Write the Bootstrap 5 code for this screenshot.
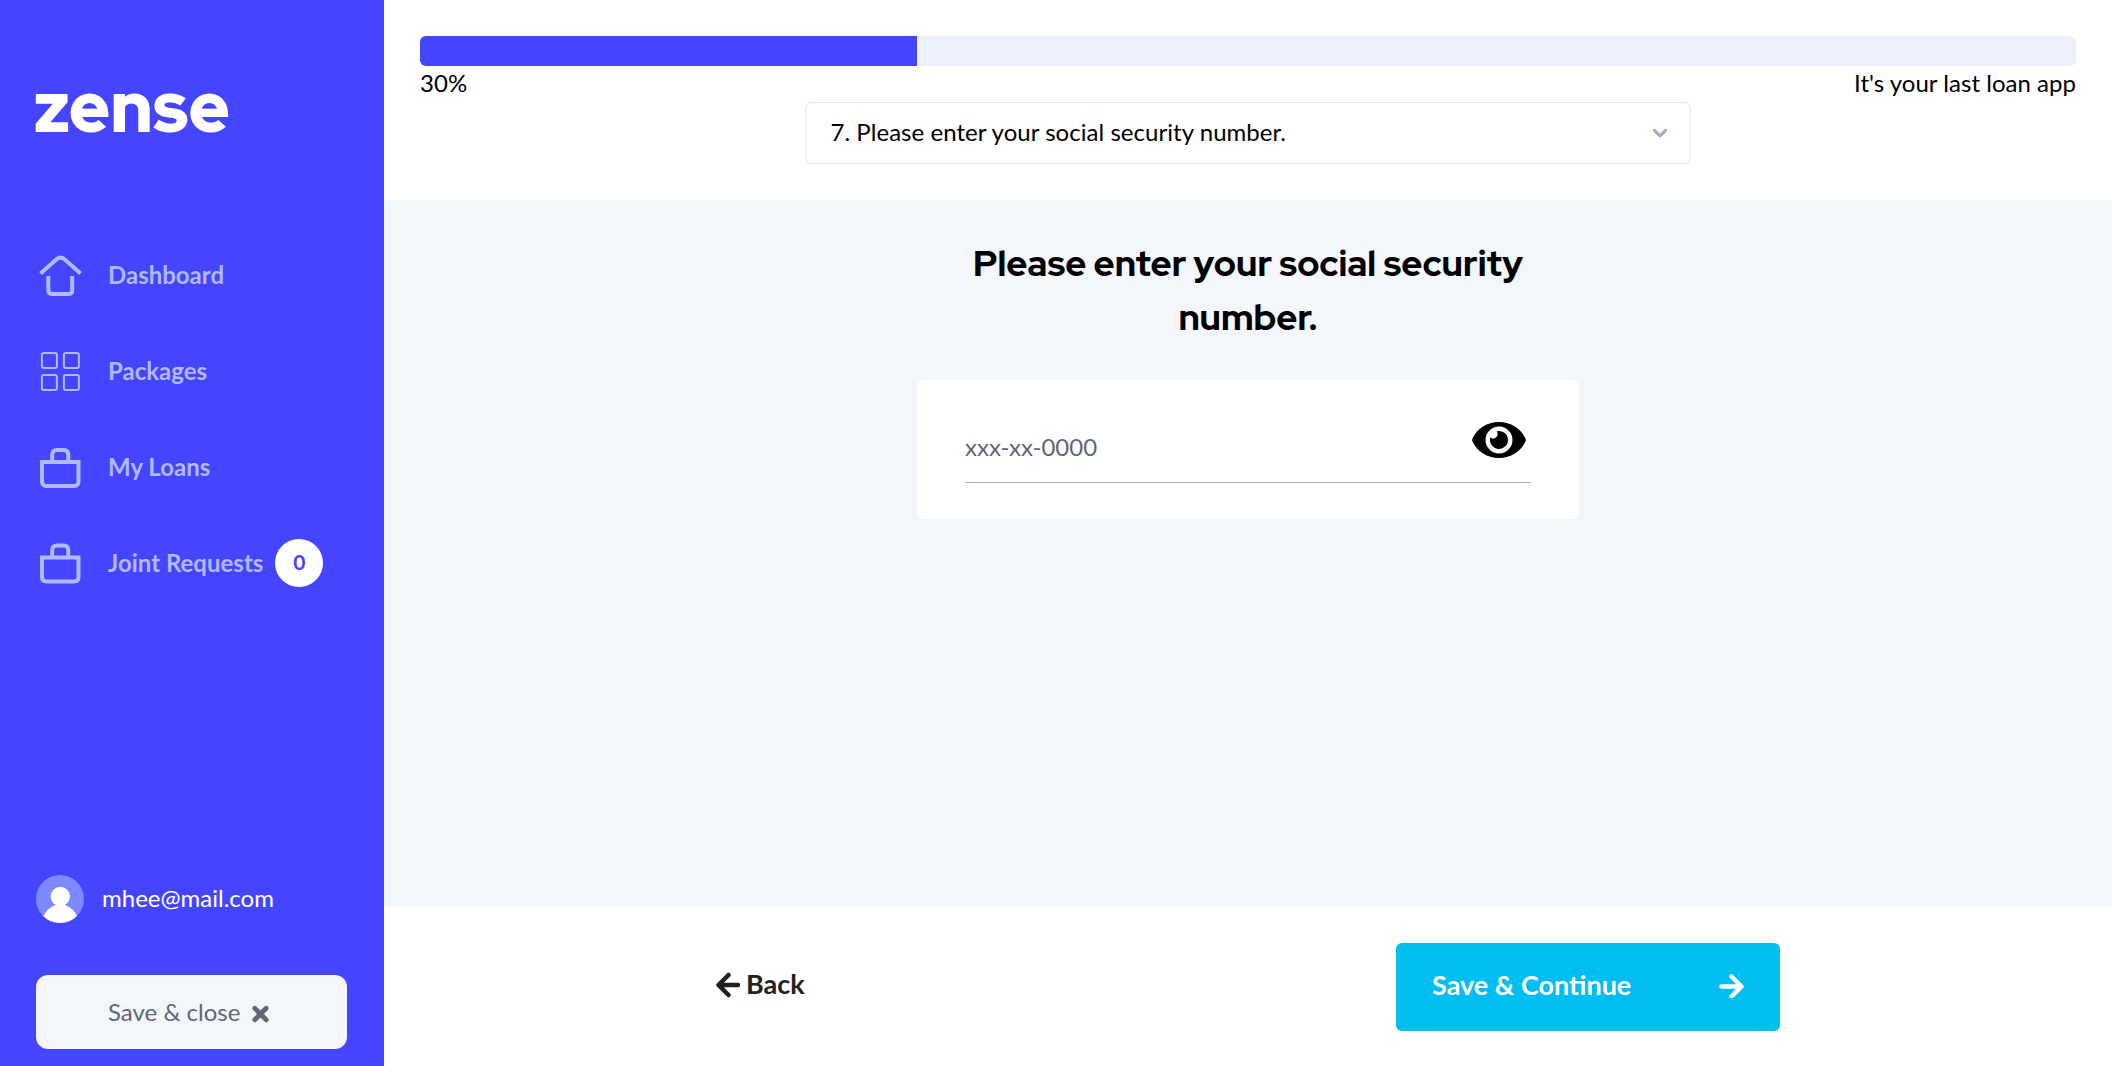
<!DOCTYPE html>
<html lang="en">
<head>
<meta charset="utf-8">
<meta name="viewport" content="width=device-width, initial-scale=1">
<title>zense</title>
<link rel="stylesheet" href="https://cdn.jsdelivr.net/npm/bootstrap@5.3.0/dist/css/bootstrap.min.css">
<style>
body{font-family:Lato,"Liberation Sans",sans-serif;font-size:24px;line-height:36px;color:#000;background:#fff}
.sidebar{width:384px;background:#4545ff;padding:50px 36px 17px}
.logo{height:120px;margin:0 0 57px -10px;overflow:visible}
.side-link{height:96px;color:#afbaff;font-weight:700;padding:0}
.side-link:hover{color:#fff}
.side-link svg{width:48px;height:48px;margin-right:24px}
.count{width:48px;height:48px;background:#fff;color:#4545ff;margin-left:12px;font-size:21px;padding-bottom:2px}
.user{color:#fff;gap:18px;margin-bottom:52px}
.user span{padding-bottom:3px}
.btn-close-app{width:311px;height:74px;border-radius:12px;background:#f3f6fb;color:#626675;font-size:24px;line-height:36px;padding:0 0 1px 71px}
.topbar{height:200px;padding:36px 36px 0}
.progress{height:30px;border-radius:6px;background:#edf0fa}
.progress-bar{background:#4545ff}
.caption-row{line-height:34px;padding-bottom:2px;letter-spacing:.03px}
.question{width:886px;height:62px;margin:0 auto;border:1px solid #e2e8f0;border-width:1px 2px;border-color:#e2e8f0 #edf2f7;border-radius:6px;padding:0 20px 2px 23.5px;letter-spacing:.04px}
.question svg{margin-top:1px}
.stage{background:#f3f6fb}
.stage h1{font-family:"Red Hat Display",Inter,sans-serif;font-weight:800;font-size:36px;line-height:54px;width:662px;padding-top:36px;margin:0 0 36px}
.entry{width:662px;height:139px;border-radius:6px;padding:30px 48px 36px}
.ssn{border:0;border-bottom:1px solid #a8afc6;border-radius:0;height:73px;padding:1px 0 0;font-size:24px;color:#626675;background:none}
.ssn::placeholder{color:#626675;opacity:1}
.eye{right:53px;top:42px}
.actions{height:159px;padding:36px 332px}
.btn-back{font-size:27px;font-weight:700;color:#212121;padding:0 0 4px;border:0}
.btn-back span{padding-left:6px}
.btn-next{width:384px;height:88px;border-radius:6px;background:#00bdf2;color:#fff;font-size:27px;font-weight:700;padding:0 36px 4px;border:0}
</style>
<script src="https://cdn.jsdelivr.net/npm/bootstrap@5.3.0/dist/js/bootstrap.bundle.min.js"></script>
</head>
<body>
<div class="d-flex vh-100 overflow-hidden">
  <aside class="sidebar d-flex flex-column flex-shrink-0">
    <svg class="logo flex-shrink-0" width="220" height="120" viewBox="0 0 220 120"><text x="8" y="81.500" textLength="196" lengthAdjust="spacingAndGlyphs" font-family="Red Hat Display, Inter, sans-serif" font-weight="900" font-size="73" fill="#fff">zense</text></svg>
    <nav class="nav flex-column flex-nowrap">
      <a class="nav-link side-link d-flex align-items-center" href="#"><svg viewBox="0 0 48 48" fill="none" stroke="currentColor" stroke-width="4"><path d="M4.500 22.500 20.500 8.300Q24.500 5 28.500 8.300L44.500 22.500M12.300 25V39Q12.300 43 16.300 43H32.200Q36.200 43 36.200 39V25"/></svg>Dashboard</a>
      <a class="nav-link side-link d-flex align-items-center" href="#"><svg viewBox="0 0 48 48" fill="none" stroke="currentColor" stroke-width="2"><rect x="5.900" y="6" width="15" height="15" rx="2"/><rect x="27.900" y="6" width="15" height="15" rx="2"/><rect x="5.900" y="28" width="15" height="15" rx="2"/><rect x="27.900" y="28" width="15" height="15" rx="2"/></svg>Packages</a>
      <a class="nav-link side-link d-flex align-items-center" href="#"><svg viewBox="0 0 48 48" fill="none" stroke="currentColor" stroke-width="4"><path d="M6 19H42.500V38.500Q42.500 43 38 43H10.500Q6 43 6 38.500ZM16.200 19V12Q16.200 7 21 7H27.500Q32.300 7 32.300 12V19"/></svg>My Loans</a>
      <a class="nav-link side-link d-flex align-items-center" href="#"><svg viewBox="0 0 48 48" fill="none" stroke="currentColor" stroke-width="4"><path d="M6 18.500H42.500V38Q42.500 42.500 38 42.500H10.500Q6 42.500 6 38ZM16.200 18.500V11.500Q16.200 6.500 21 6.500H27.500Q32.300 6.500 32.300 11.500V18.500"/></svg>Joint Requests<span class="count rounded-circle d-flex align-items-center justify-content-center">0</span></a>
    </nav>
    <div class="user d-flex align-items-center mt-auto">
      <svg width="48" height="48" viewBox="0 0 48 48"><defs><clipPath id="disc"><circle cx="24" cy="24" r="24"/></clipPath></defs><g clip-path="url(#disc)"><path fill="#7d89ff" d="M0 0H48V48H0z"/><circle cx="24.300" cy="21.500" r="9.700" fill="#fff"/><ellipse cx="24.300" cy="48" rx="18" ry="18.500" fill="#fff"/></g></svg>
      <span>mhee@mail.com</span>
    </div>
    <button class="btn btn-close-app d-flex align-items-center flex-shrink-0">Save &amp; close<svg class="ms-2 mt-1" width="26" height="26" viewBox="0 0 26 26"><path d="M6.800 7.300 18.200 18.700M18.200 7.300 6.800 18.700" fill="none" stroke="currentColor" stroke-width="4.800" stroke-linecap="round"/></svg></button>
  </aside>
  <main class="flex-grow-1 d-flex flex-column">
    <header class="topbar bg-white flex-shrink-0">
      <div class="progress"><div class="progress-bar" style="width:30%"></div></div>
      <div class="caption-row d-flex justify-content-between"><span>30%</span><span>It's your last loan app</span></div>
      <div class="question d-flex align-items-center justify-content-between"><span>7. Please enter your social security number.</span><svg width="18" height="18" viewBox="0 0 18 18"><path d="M3.500 6.500 9 11.800 14.500 6.500" fill="none" stroke="#a0aec0" stroke-width="3.200" stroke-linecap="round" stroke-linejoin="round"/></svg></div>
    </header>
    <section class="stage flex-grow-1 d-flex flex-column align-items-center">
      <h1 class="text-center">Please enter your social security<br>number.</h1>
      <div class="entry bg-white position-relative">
        <input class="form-control shadow-none ssn" type="text" placeholder="xxx-xx-0000" aria-label="Social security number">
        <svg class="eye position-absolute" width="54" height="36" viewBox="0 0 54 36"><path fill-rule="evenodd" d="M27 0C15 0 5.500 6.500.6 16.200Q-.2 18 .6 19.800C5.500 29.500 15 36 27 36S48.500 29.500 53.400 19.800Q54.200 18 53.400 16.200C48.500 6.500 39 0 27 0ZM27 4.500A13.500 13.500 0 1 1 27 31.500 13.500 13.500 0 1 1 27 4.500Z"/><path d="M24.600 9.300A9 9 0 1 1 18.300 15.600 4.500 4.500 0 0 0 24.600 9.300Z"/></svg>
      </div>
    </section>
    <footer class="actions bg-white d-flex align-items-start justify-content-between flex-shrink-0">
      <button class="btn btn-back d-flex align-items-center h-100"><svg width="24" height="26" viewBox="0 0 24 26"><path d="M12.500 3 2.500 13 12.500 23M3 13H22" fill="none" stroke="currentColor" stroke-width="4.500" stroke-linecap="round" stroke-linejoin="round"/></svg><span>Back</span></button>
      <button class="btn btn-next d-flex align-items-center justify-content-between">Save &amp; Continue<svg width="25" height="26" viewBox="0 0 25 26"><path d="M12.500 4.500 22.500 14.500 12.500 24.500M2.500 14.500H22" fill="none" stroke="currentColor" stroke-width="4.500" stroke-linecap="round" stroke-linejoin="round"/></svg></button>
    </footer>
  </main>
</div>
</body>
</html>
